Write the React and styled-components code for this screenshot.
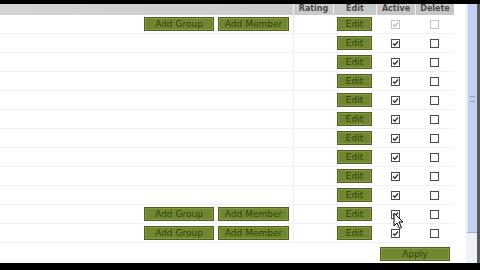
import React from 'react'
import styled, { createGlobalStyle } from 'styled-components'

const GlobalStyle = createGlobalStyle`
  html, body {
    margin: 0;
    padding: 0;
    background: #000;
  }
  body {
    font-family: Tahoma, "DejaVu Sans", Verdana, sans-serif;
    overflow: hidden;
  }
`

const Screen = styled.div`
  width: 480px;
  height: 270px;
  display: flex;
  flex-direction: column;
  background: #000;
`

const TopBar = styled.div`
  height: 4px;
  flex-shrink: 0;
  background: #000;
`

const BottomBar = styled.div`
  height: 7px;
  flex-shrink: 0;
  background: #000;
`

const Window = styled.div`
  flex: 1;
  display: flex;
  background: #fff;
  position: relative;
  overflow: hidden;
`

const TableArea = styled.div`
  width: 454px;
  flex-shrink: 0;
  display: flex;
  flex-direction: column;
`

const Gutter = styled.div`
  width: 12px;
  flex-shrink: 0;
  background: #fff;
`

const ScrollTrack = styled.div`
  width: 11px;
  flex-shrink: 0;
  display: flex;
  flex-direction: column;
  background-color: #eef1f8;
`

const ScrollThumb = styled.div`
  width: 11px;
  height: 229px;
  box-sizing: border-box;
  padding-top: 92px;
  background-color: #bfd0f1;
  border-left: 2px solid #e3eaf8;
  border-bottom: 1px solid #9fb3dc;
  display: flex;
  justify-content: center;
`

const Grip = styled.div`
  width: 5px;
  height: 4px;
  border-top: 1px solid #8ea2c8;
  border-bottom: 1px solid #8ea2c8;
`

const Edge = styled.div`
  width: 3px;
  flex-shrink: 0;
  background: #5a5a5a;
`

const COLS = '293px 40px 43px 39px 39px'

const HeaderRow = styled.div`
  display: grid;
  grid-template-columns: ${COLS};
  height: 11px;
  background: linear-gradient(to right, #d4d4d4, #c6c6c6);
`

const HeaderCell = styled.div`
  font-family: Verdana, "DejaVu Sans", sans-serif;
  font-size: 8px;
  font-weight: bold;
  color: #4a4a4a;
  line-height: 10px;
  height: 11px;
  overflow: hidden;
  text-align: center;
  white-space: nowrap;
  border-left: ${p => (p.$first ? 'none' : '1px solid #efefef')};
`

const Row = styled.div`
  display: grid;
  grid-template-columns: ${COLS};
  height: 19px;
  border-bottom: 1px solid #f1f1f1;
  box-sizing: border-box;
`

const Cell = styled.div`
  display: flex;
  align-items: center;
  justify-content: ${p => p.$justify || 'center'};
  gap: 4px;
  padding-right: ${p => p.$pr || 0}px;
  border-left: ${p => (p.$line ? '1px solid #f0f0f0' : 'none')};
`

const Button = styled.div`
  box-sizing: border-box;
  width: ${p => p.$w}px;
  height: 14px;
  background: #70872f;
  border: 1px solid #4f6120;
  box-shadow: inset 0 0 0 1px #849a42;
  color: #34420f;
  font-size: 9px;
  line-height: 12px;
  text-align: center;
  white-space: nowrap;
`

const Box = styled.div`
  box-sizing: border-box;
  width: 9px;
  height: 9px;
  border: 1px solid ${p => (p.$disabled ? '#c4c4c4' : '#4a4a4a')};
  background: #fff;
  display: flex;
  align-items: center;
  justify-content: center;
`

const ApplyRow = styled.div`
  display: flex;
  justify-content: flex-end;
  padding-top: 4px;
  padding-right: 4px;
`

const Cursor = styled.svg`
  position: absolute;
  left: 393px;
  top: 208px;
`

function Check({ checked, disabled }) {
  return (
    <Box $disabled={disabled}>
      {checked && (
        <svg width="7" height="7" viewBox="0 0 7 7">
          <path d="M1 3.5 L2.8 5.3 L6 1.5" fill="none" stroke={disabled ? '#b8b8b8' : '#2a2a2a'} strokeWidth="1.3" />
        </svg>
      )}
    </Box>
  )
}

const rows = [
  { add: true, disabled: true },
  {}, {}, {}, {}, {}, {}, {}, {}, {},
  { add: true },
  { add: true },
]

export default function App() {
  return (
    <Screen>
      <GlobalStyle />
      <TopBar />
      <Window>
        <TableArea>
          <HeaderRow>
            <HeaderCell $first />
            <HeaderCell>Rating</HeaderCell>
            <HeaderCell>Edit</HeaderCell>
            <HeaderCell>Active</HeaderCell>
            <HeaderCell>Delete</HeaderCell>
          </HeaderRow>
          {rows.map((r, i) => (
            <Row key={i}>
              <Cell $justify="flex-end" $pr={4}>
                {r.add && (
                  <>
                    <Button $w={70}>Add Group</Button>
                    <Button $w={71}>Add Member</Button>
                  </>
                )}
              </Cell>
              <Cell $line />
              <Cell>
                <Button $w={35}>Edit</Button>
              </Cell>
              <Cell>
                <Check checked disabled={r.disabled} />
              </Cell>
              <Cell>
                <Check disabled={r.disabled} />
              </Cell>
            </Row>
          ))}
          <ApplyRow>
            <Button $w={70}>Apply</Button>
          </ApplyRow>
        </TableArea>
        <Gutter />
        <ScrollTrack>
          <ScrollThumb>
            <Grip />
          </ScrollThumb>
        </ScrollTrack>
        <Edge />
        <Cursor width="12" height="18" viewBox="0 0 12 18">
          <path d="M1 1 L1 14 L4 11 L6.5 16.5 L8.5 15.5 L6 10 L10 10 Z" fill="#fff" stroke="#000" strokeWidth="1" />
        </Cursor>
      </Window>
      <BottomBar />
    </Screen>
  )
}
